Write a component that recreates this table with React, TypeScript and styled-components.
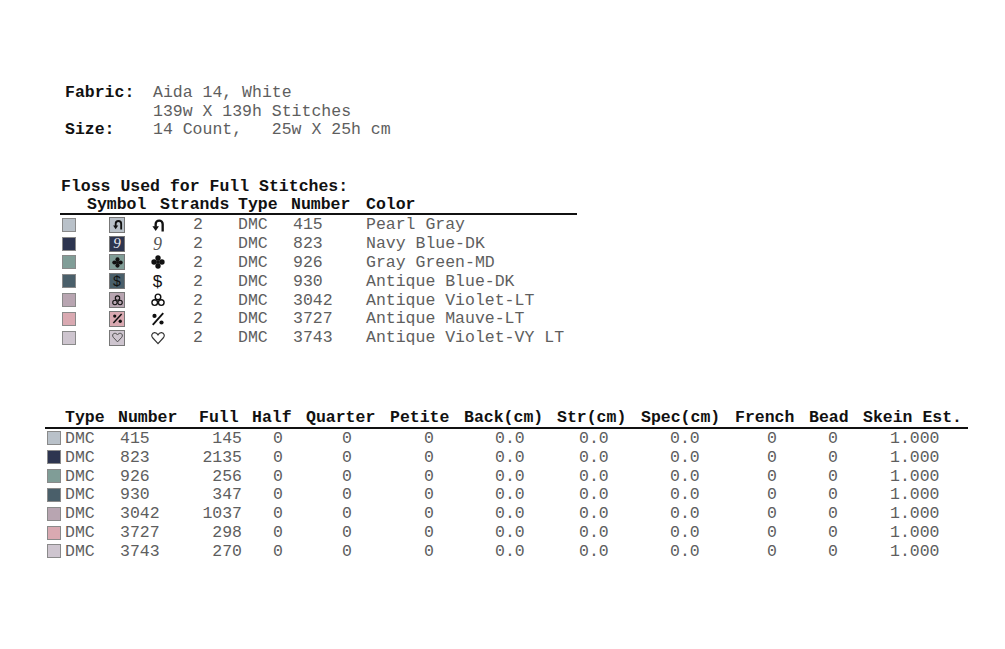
import React from "react";
import styled, { createGlobalStyle } from "styled-components";

const Global = createGlobalStyle`
  html, body { margin: 0; padding: 0; background: #fff; }
  body {
    font-family: "Liberation Mono", "Courier New", monospace;
    font-size: 16.5px;
    color: #5e5e5e;
  }
`;

const Page = styled.div`
  width: 1005px;
  height: 649px;
  padding-top: 84px;
  box-sizing: border-box;
  overflow: hidden;
`;

const Info = styled.div`
  margin-left: 65px;
  display: grid;
  grid-template-columns: 88px auto;
  line-height: 18.6px;
  white-space: pre;
`;

const Label = styled.div`
  font-weight: bold;
  color: #111;
`;

const Value = styled.div`
  color: #5e5e5e;
`;

const FlossSection = styled.section`
  margin-top: 37px;
  margin-left: 60px;
  width: 517px;
`;

const Title = styled.div`
  font-weight: bold;
  color: #111;
  line-height: 19.4px;
  padding-left: 1px;
`;

const FlossHeader = styled.div`
  display: grid;
  grid-template-columns: 27px 73px 78px 53px 75px 1fr;
  line-height: 17px;
  height: 17px;
  font-weight: bold;
  color: #111;
  border-bottom: 2px solid #111;
`;

const FlossRow = styled.div`
  display: grid;
  grid-template-columns: 27px 48px 45px 58px 53px 75px 1fr;
  height: 18.83px;
  align-items: center;
  white-space: pre;
`;

const Swatch = styled.span<{ $c: string; $size?: number }>`
  display: inline-block;
  box-sizing: border-box;
  width: ${(p) => p.$size ?? 14}px;
  height: ${(p) => p.$size ?? 14}px;
  background: ${(p) => p.$c};
  border: 1px solid #8a8a8a;
  margin-left: 2px;
  vertical-align: middle;
`;

const SymBox = styled.span<{ $c: string; $fg: string }>`
  display: inline-flex;
  align-items: center;
  justify-content: center;
  box-sizing: border-box;
  width: 16px;
  height: 16px;
  margin-left: 22px;
  background: ${(p) => p.$c};
  border: 1px solid #777;
  color: ${(p) => p.$fg};
  overflow: hidden;
  vertical-align: middle;
`;

const Glyph = styled.span`
  display: flex;
  align-items: center;
  justify-content: center;
  color: #111;
`;

const NineText = styled.span<{ $size: number }>`
  font-family: "Liberation Serif", serif;
  font-style: italic;
  font-size: ${(p) => p.$size}px;
  line-height: 1;
  color: inherit;
`;

const DollarText = styled.span<{ $size: number }>`
  font-family: "Liberation Sans", Arial, sans-serif;
  font-size: ${(p) => p.$size}px;
  line-height: 1;
`;

const Cell = styled.span<{ $pl?: number }>`
  padding-left: ${(p) => p.$pl ?? 0}px;
`;

const BottomSection = styled.section`
  margin-top: 62px;
  margin-left: 45px;
  width: 923px;
`;

const cols = "73px 81px 53px 54px 84px 74px 93px 84px 94px 74px 54px 105px";

const BottomHeader = styled.div`
  display: grid;
  grid-template-columns: ${cols};
  line-height: 18px;
  height: 18px;
  font-weight: bold;
  color: #111;
  border-bottom: 2px solid #111;
  white-space: pre;
`;

const HeadCell = styled.span<{ $pl?: number }>`
  padding-left: ${(p) => p.$pl ?? 0}px;
`;

const BottomRow = styled.div`
  display: grid;
  grid-template-columns: ${cols};
  height: 18.83px;
  align-items: center;
  white-space: pre;
`;

const TypeCell = styled.span`
  display: flex;
  align-items: center;
  gap: 4px;
`;

const DataCell = styled.span<{ $pl?: number; $right?: boolean }>`
  padding-left: ${(p) => p.$pl ?? 0}px;
  padding-right: ${(p) => (p.$right ? 10 : 0)}px;
  text-align: ${(p) => (p.$right ? "right" : "left")};
`;

type Sym = "arrow" | "nine" | "club" | "dollar" | "trefoil" | "percent" | "heart";

const SymbolIcon: React.FC<{ kind: Sym; size: number; color?: string }> = ({ kind, size, color = "currentColor" }) => {
  if (kind === "nine") return <NineText $size={size + 4}>9</NineText>;
  if (kind === "dollar") return <DollarText $size={size + 3}>$</DollarText>;
  const s = size;
  switch (kind) {
    case "arrow":
      return (
        <svg width={s} height={s} viewBox="0 0 12 12">
          <path d="M4 7.5 V5.2 a3 3 0 0 1 6 0 V11.5" fill="none" stroke={color} strokeWidth="2" />
          <path d="M1.2 7 H6.8 L4 11.2 Z" fill={color} />
        </svg>
      );
    case "club":
      return (
        <svg width={s} height={s} viewBox="0 0 12 12">
          <circle cx="6" cy="2.6" r="2.3" fill={color} />
          <circle cx="2.6" cy="6" r="2.3" fill={color} />
          <circle cx="9.4" cy="6" r="2.3" fill={color} />
          <circle cx="6" cy="9.4" r="2.3" fill={color} />
          <rect x="4.5" y="4.5" width="3" height="3" fill={color} />
        </svg>
      );
    case "trefoil":
      return (
        <svg width={s} height={s} viewBox="0 0 12 12">
          <circle cx="6" cy="3.4" r="2.4" fill="none" stroke={color} strokeWidth="1.2" />
          <circle cx="3.2" cy="8.2" r="2.4" fill="none" stroke={color} strokeWidth="1.2" />
          <circle cx="8.8" cy="8.2" r="2.4" fill="none" stroke={color} strokeWidth="1.2" />
        </svg>
      );
    case "percent":
      return (
        <svg width={s} height={s} viewBox="0 0 12 12">
          <path d="M10.5 1 L1.5 11" stroke={color} strokeWidth="1.6" />
          <circle cx="3" cy="3.4" r="1.8" fill={color} />
          <circle cx="9" cy="9" r="1.8" fill={color} />
        </svg>
      );
    case "heart":
      return (
        <svg width={s} height={s} viewBox="0 0 12 12">
          <path
            d="M6 10.8 L1.4 5.8 C0 4.2 0.6 1.6 3 1.4 C4.4 1.3 5.4 2.2 6 3.3 C6.6 2.2 7.6 1.3 9 1.4 C11.4 1.6 12 4.2 10.6 5.8 Z"
            fill="none"
            stroke={color}
            strokeWidth="1"
          />
        </svg>
      );
  }
  return null;
};

type Floss = {
  num: string;
  name: string;
  color: string;
  sym: Sym;
  fg: string;
  glyph: string;
  full: string;
};

const flosses: Floss[] = [
  { num: "415", name: "Pearl Gray", color: "#b9c1c9", sym: "arrow", fg: "#111", glyph: "#111", full: "145" },
  { num: "823", name: "Navy Blue-DK", color: "#2d3550", sym: "nine", fg: "#e8e8f0", glyph: "#555", full: "2135" },
  { num: "926", name: "Gray Green-MD", color: "#809d97", sym: "club", fg: "#111", glyph: "#111", full: "256" },
  { num: "930", name: "Antique Blue-DK", color: "#4a5f6a", sym: "dollar", fg: "#111", glyph: "#111", full: "347" },
  { num: "3042", name: "Antique Violet-LT", color: "#b8a5b1", sym: "trefoil", fg: "#111", glyph: "#111", full: "1037" },
  { num: "3727", name: "Antique Mauve-LT", color: "#d9a9b1", sym: "percent", fg: "#111", glyph: "#111", full: "298" },
  { num: "3743", name: "Antique Violet-VY LT", color: "#cec5cf", sym: "heart", fg: "#444", glyph: "#333", full: "270" },
];

export default function App() {
  return (
    <Page>
      <Global />
      <Info>
        <Label>Fabric:</Label>
        <Value>Aida 14, White</Value>
        <span />
        <Value>139w X 139h Stitches</Value>
        <Label>Size:</Label>
        <Value>14 Count,   25w X 25h cm</Value>
      </Info>

      <FlossSection>
        <Title>Floss Used for Full Stitches:</Title>
        <FlossHeader>
          <span />
          <span>Symbol</span>
          <span>Strands</span>
          <span>Type</span>
          <span>Number</span>
          <span>Color</span>
        </FlossHeader>
        {flosses.map((f) => (
          <FlossRow key={f.num}>
            <span>
              <Swatch $c={f.color} />
            </span>
            <span>
              <SymBox $c={f.color} $fg={f.fg}>
                <SymbolIcon kind={f.sym} size={11} />
              </SymBox>
            </span>
            <Glyph style={{ color: f.glyph }}>
              <SymbolIcon kind={f.sym} size={14} />
            </Glyph>
            <Cell $pl={13}>2</Cell>
            <Cell>DMC</Cell>
            <Cell $pl={2}>{f.num}</Cell>
            <Cell>{f.name}</Cell>
          </FlossRow>
        ))}
      </FlossSection>

      <BottomSection>
        <BottomHeader>
          <HeadCell $pl={20}>Type</HeadCell>
          <HeadCell>Number</HeadCell>
          <HeadCell>Full</HeadCell>
          <HeadCell>Half</HeadCell>
          <HeadCell>Quarter</HeadCell>
          <HeadCell>Petite</HeadCell>
          <HeadCell>Back(cm)</HeadCell>
          <HeadCell>Str(cm)</HeadCell>
          <HeadCell>Spec(cm)</HeadCell>
          <HeadCell>French</HeadCell>
          <HeadCell>Bead</HeadCell>
          <HeadCell>Skein Est.</HeadCell>
        </BottomHeader>
        {flosses.map((f) => (
          <BottomRow key={f.num}>
            <TypeCell>
              <Swatch $c={f.color} $size={14} />
              <span>DMC</span>
            </TypeCell>
            <DataCell $pl={2}>{f.num}</DataCell>
            <DataCell $right>{f.full}</DataCell>
            <DataCell $pl={21}>0</DataCell>
            <DataCell $pl={36}>0</DataCell>
            <DataCell $pl={34}>0</DataCell>
            <DataCell $pl={31}>0.0</DataCell>
            <DataCell $pl={22}>0.0</DataCell>
            <DataCell $pl={29}>0.0</DataCell>
            <DataCell $pl={32}>0</DataCell>
            <DataCell $pl={19}>0</DataCell>
            <DataCell $pl={27}>1.000</DataCell>
          </BottomRow>
        ))}
      </BottomSection>
    </Page>
  );
}
